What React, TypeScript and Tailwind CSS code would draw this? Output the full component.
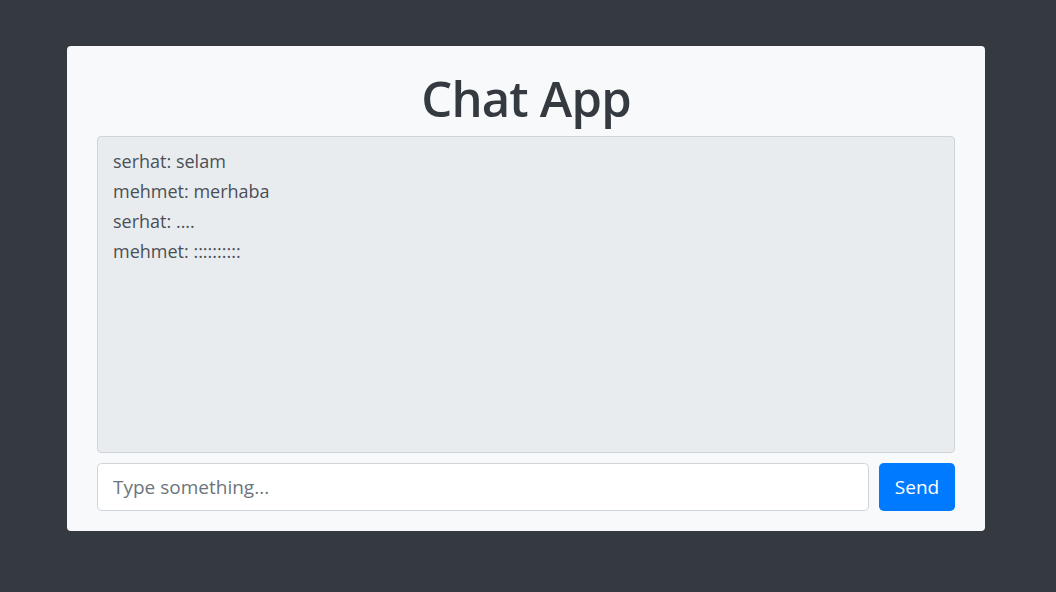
import React from "react";

const messages = [
  { user: "serhat", text: "selam" },
  { user: "mehmet", text: "merhaba" },
  { user: "serhat", text: "...." },
  { user: "mehmet", text: "::::::::::" },
];

export default function App() {
  return (
    <div
      className="w-full h-[592px] bg-[#343a40] pt-[46px]"
      style={{ fontFamily: '"Open Sans", "Noto Sans", sans-serif' }}
    >
      <div className="ml-[67px] w-[918px] h-[485px] bg-[#f8f9fa] rounded-[4px] px-[30px] pt-[22px] pb-[20px] flex flex-col">
        <h1 className="text-center text-[49px] leading-[60px] font-semibold text-[#343a40] mb-[8px] tracking-[-0.8px]">
          Chat App
        </h1>
        <div className="flex-1 bg-[#e9ecef] border border-[#ced4da] rounded-[4px] px-[15px] pt-[9px] text-[18px] leading-[30px] text-[#495057]">
          {messages.map((m, i) => (
            <div key={i}>
              {m.user}: {m.text}
            </div>
          ))}
        </div>
        <div className="flex gap-[10px] mt-[10px]">
          <input
            type="text"
            placeholder="Type something..."
            className="flex-1 h-[48px] bg-white border border-[#ced4da] rounded-[4.8px] px-[15px] text-[19px] text-[#495057] placeholder:text-[#6c757d] outline-none"
          />
          <button className="w-[76px] h-[48px] bg-[#007bff] text-white rounded-[4.8px] text-[19px]">
            Send
          </button>
        </div>
      </div>
    </div>
  );
}
